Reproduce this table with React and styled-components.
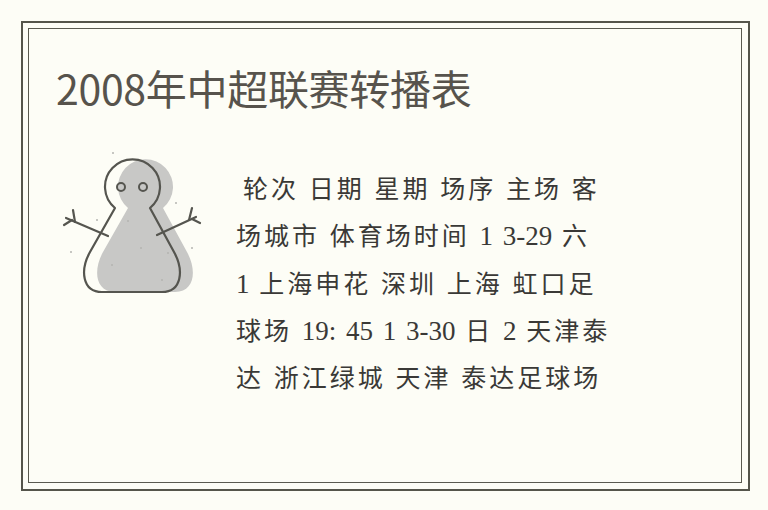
import React from 'react';
import styled, { createGlobalStyle } from 'styled-components';

const GlobalStyle = createGlobalStyle`
	html, body {
		margin: 0;
		background: #fdfdf6;
	}
	* {
		box-sizing: border-box;
	}
`;

const Page = styled.div`
	height: 510px;
	padding: 21px 18px 19px 21px;
`;

const OuterFrame = styled.div`
	height: 100%;
	border: 2px solid #55554b;
	padding: 5px 6px 6px 5px;
`;

const InnerFrame = styled.section`
	height: 100%;
	border: 1px solid #5a5a50;
`;

const Title = styled.h1`
	margin: 38px 0 0 27px;
	font-family: "Noto Sans CJK SC", "Noto Sans", sans-serif;
	font-size: 41px;
	font-weight: 400;
	line-height: 1;
	color: #57534c;
	letter-spacing: -0.3px;
`;

const Row = styled.div`
	display: flex;
	align-items: flex-start;
	margin-top: 32px;
	padding-left: 21px;
`;

const Figure = styled.svg`
	flex: none;
	display: block;
`;

const Text = styled.div`
	margin-left: 6px;
	padding-top: 24px;
	font-family: "Noto Sans CJK SC", "Liberation Serif", serif;
	font-size: 25px;
	letter-spacing: 3px;
	line-height: 47.3px;
	color: #3a3936;
`;

const Line = styled.div`
	white-space: pre;
	height: 47.3px;
	padding-left: ${(p) => p.$indent || 0}px;
`;

// 数字和空格用衬线体，不加字距
const Latin = styled.span`
	font-family: "Liberation Serif", serif;
	font-size: 27px;
	line-height: 1;
	letter-spacing: 0;
	word-spacing: 3px;
`;

const lines = [
	'轮次 日期 星期 场序 主场 客',
	'场城市 体育场时间 1 3-29 六',
	'1 上海申花 深圳 上海 虹口足',
	'球场 19: 45 1 3-30 日 2 天津泰',
	'达 浙江绿城 天津 泰达足球场',
];

const runs = (s) =>
	s
		.split(/([\x00-\x7f]+)/)
		.filter(Boolean)
		.map((part, i) =>
			/^[\x00-\x7f]/.test(part) ? (
				<Latin key={i}>{part}</Latin>
			) : (
				<React.Fragment key={i}>{part}</React.Fragment>
			)
		);

const BODY =
	'M65,68 A27.5,27.5 0 1 1 100,68 L124,112 C134,130 132,152 112,152 L52,152 C32,152 30,130 40,112 Z';

const dots = [
	[63, 13], [126, 63], [47, 80], [78, 81], [21, 112],
	[91, 108], [142, 108], [62, 125], [118, 113], [112, 140],
];

function Snowman() {
	return (
		<Figure width="180" height="170" viewBox="0 0 180 170">
			<path d={BODY} fill="#c8c8c6" transform="translate(13 0)" />
			<path d={BODY} fill="none" stroke="#55554f" strokeWidth="2.2" strokeLinejoin="round" />
			<circle cx="71" cy="47" r="4" fill="none" stroke="#55554f" strokeWidth="2" />
			<circle cx="93" cy="47" r="4" fill="none" stroke="#55554f" strokeWidth="2" />
			<g stroke="#55554f" strokeWidth="2.2" strokeLinecap="round" fill="none">
				<path d="M58,96 L16,78" />
				<path d="M25,82 L23,70" />
				<path d="M22,80 L14,85" />
				<path d="M107,95 L146,77" />
				<path d="M139,80 L142,68" />
				<path d="M142,79 L150,83" />
			</g>
			{dots.map(([x, y], i) => (
				<circle key={i} cx={x} cy={y} r="1" fill="#b5b5b0" />
			))}
		</Figure>
	);
}

export default function App() {
	return (
		<>
			<GlobalStyle />
			<Page>
				<OuterFrame>
					<InnerFrame>
						<Title>2008年中超联赛转播表</Title>
						<Row>
							<Snowman />
							<Text>
								{lines.map((l, i) => (
									<Line key={i} $indent={i === 0 ? 7 : 0}>
										{runs(l)}
									</Line>
								))}
							</Text>
						</Row>
					</InnerFrame>
				</OuterFrame>
			</Page>
		</>
	);
}
